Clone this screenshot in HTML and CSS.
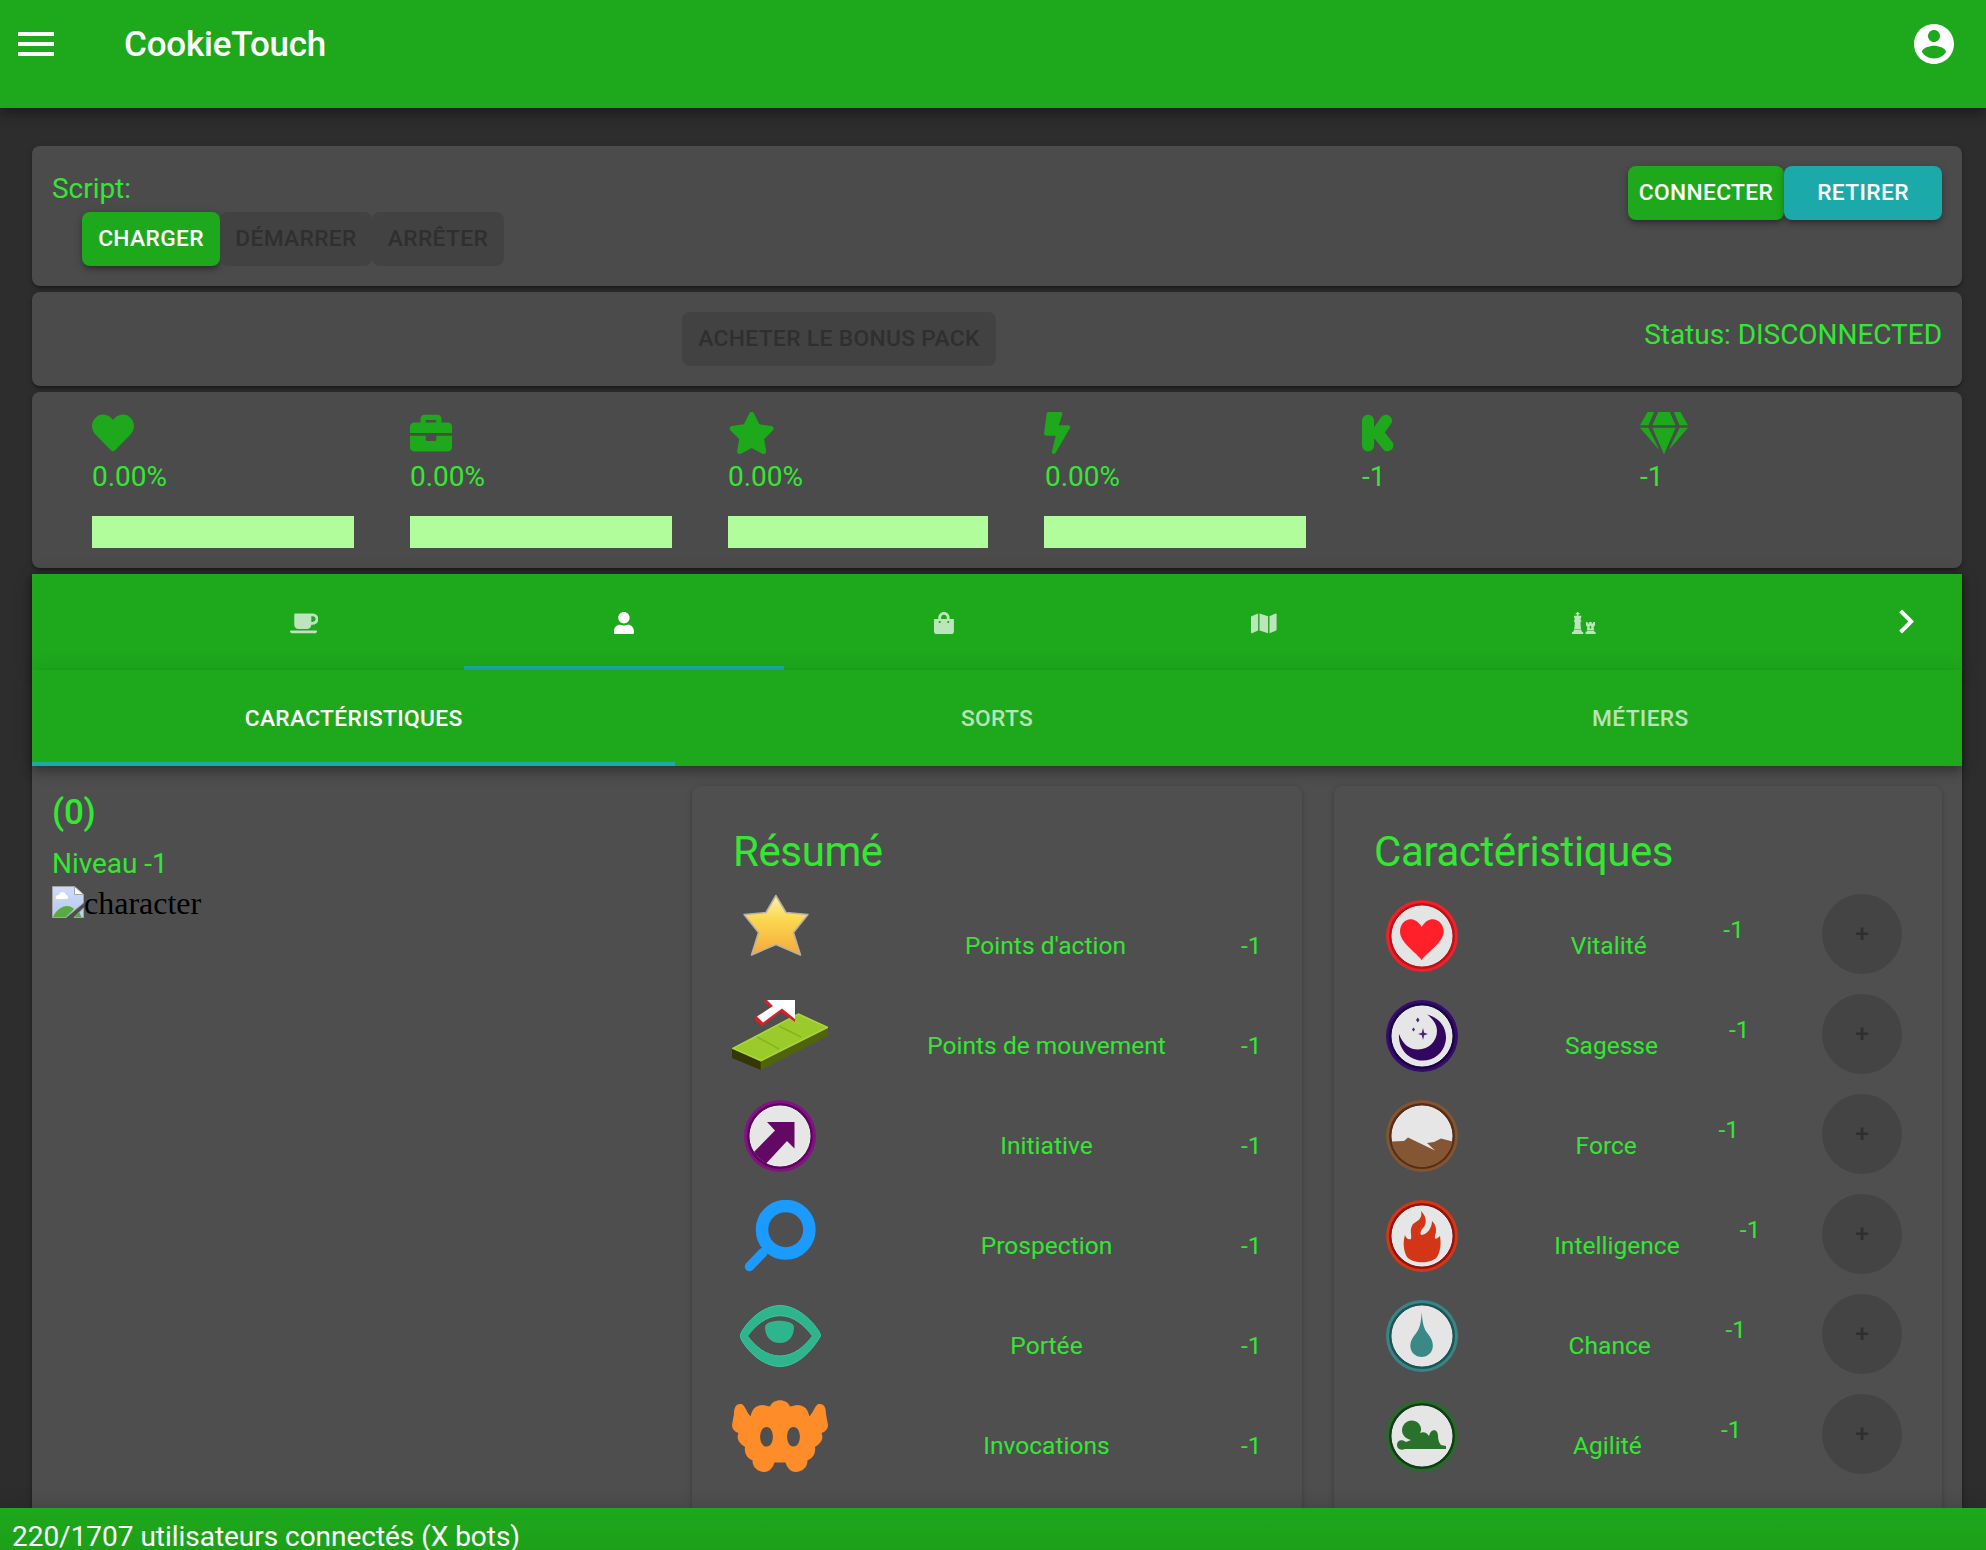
FILE: index.html
```html
<!DOCTYPE html>
<html lang="fr">
<head>
<meta charset="utf-8">
<title>CookieTouch</title>
<link rel="stylesheet" href="styles.css">
</head>
<body>
<div class="app">
  <header class="appbar">
    <svg class="mi" viewBox="0 0 24 24"><path d="M3 18h18v-2H3v2zm0-5h18v-2H3v2zm0-7v2h18V6H3z"/></svg>
    <h1 class="brand">CookieTouch</h1>
    <svg class="mi" viewBox="0 0 24 24"><path d="M12 2C6.48 2 2 6.48 2 12s4.48 10 10 10 10-4.480 10-10S17.520 2 12 2zm0 3c1.660 0 3 1.340 3 3s-1.340 3-3 3-3-1.340-3-3 1.340-3 3-3zm0 14.200c-2.500 0-4.710-1.280-6-3.220.03-1.990 4-3.080 6-3.080 1.990 0 5.970 1.090 6 3.080-1.290 1.940-3.500 3.220-6 3.220z"/></svg>
  </header>

  <main class="content">
    <section class="card script">
      <div>
        <p class="text">Script:</p>
        <div class="btns indent">
          <button class="btn primary charger">Charger</button><button class="btn demarrer" disabled>Démarrer</button><button class="btn arreter" disabled>Arrêter</button>
        </div>
      </div>
      <div class="btns">
        <button class="btn primary connecter">Connecter</button><button class="btn secondary">Retirer</button>
      </div>
    </section>

    <section class="card pack">
      <div class="pack-mid"><button class="btn bonus" disabled>Acheter le bonus pack</button></div>
      <p class="text">Status: DISCONNECTED</p>
    </section>

    <section class="card stats">
      <div class="stat"><svg class="fa" viewBox="0 0 512 512"><path d="M462.3 62.6C407.5 15.9 326 24.3 275.7 76.2L256 96.5l-19.7-20.3C186.1 24.3 104.5 15.9 49.7 62.6c-62.8 53.6-66.1 149.8-9.9 207.9l193.500 199.800c12.500 12.900 32.800 12.900 45.300 0l193.500-199.800c56.300-58.100 53-154.300-9.800-207.900z"/></svg><p class="text">0.00%</p><div class="bar"></div></div>
      <div class="stat"><svg class="fa" viewBox="0 0 512 512"><path d="M320 336c0 8.840-7.160 16-16 16h-96c-8.840 0-16-7.160-16-16v-48H0v144c0 25.600 22.400 48 48 48h416c25.600 0 48-22.400 48-48V288H320v48zm144-208h-80V80c0-25.600-22.400-48-48-48H176c-25.600 0-48 22.400-48 48v48H48c-25.600 0-48 22.400-48 48v80h512v-80c0-25.600-22.400-48-48-48zm-144 0H192V96h128v32z"/></svg><p class="text">0.00%</p><div class="bar"></div></div>
      <div class="stat"><svg class="fa" viewBox="0 0 576 512"><path d="M259.3 17.8L194 150.2 47.9 171.5c-26.200 3.800-36.700 36.100-17.700 54.600l105.700 103-25 145.500c-4.500 26.300 23.200 46 46.400 33.700L288 439.6l130.700 68.700c23.200 12.200 50.900-7.400 46.400-33.700l-25-145.500 105.700-103c19-18.500 8.500-50.800-17.700-54.600L382 150.2 316.7 17.8c-11.700-23.600-45.600-23.900-57.400 0z"/></svg><p class="text">0.00%</p><div class="bar narrow"></div></div>
      <div class="stat"><svg class="fa" viewBox="0 0 320 512"><path d="M296 160H180.6l42.600-129.800C227.2 15 215.7 0 200 0H56C44 0 33.8 8.9 32.2 20.8l-32 240C-1.7 275.2 9.5 288 24 288h118.700L96.6 482.5c-3.600 15.200 8 29.500 23.300 29.500 8.400 0 16.400-4.400 20.800-12l176-304c9.300-15.900-2.200-36-20.700-36z"/></svg><p class="text inset">0.00%</p><div class="bar"></div></div>
      <div class="stat inset"><svg class="fa" viewBox="0 0 384 512"><path d="M147.3 114.4c0-56.200-32.500-82.400-73.400-82.400C26.2 32 0 68.2 0 113.4v283c0 47.300 25.300 83.400 74.900 83.400 39.800 0 72.400-25.600 72.400-83.400v-76.500l112.100 138.300c22.700 27.200 72.100 30.700 103.200 0 27-27.600 27.300-67.400 7.400-92.200l-90.800-114.800 74.900-107.400c17.400-24.700 17.500-63.100-10.400-89.800-30.300-29-82.400-31.600-113.600 12.800L147.3 185v-70.600z"/></svg><p class="text">-1</p></div>
      <div class="stat"><svg class="fa gem" viewBox="0 0 576 512" preserveAspectRatio="none"><path d="M485.5 0L576 160H474.9L405.7 0h79.800zm-128 0l69.200 160H149.3L218.5 0h139zm-267 0h79.800l-69.200 160H0L90.5 0zM0 192h100.700l123 251.700c1.500 3.100-2.700 5.900-5 3.300L0 192zm148.200 0h279.600l-137 318.200c-1 2.400-4.500 2.400-5.500 0L148.2 192zm204.100 251.700l123-251.700H576L357.3 446.9c-2.300 2.700-6.500-.1-5-3.200z"/></svg><p class="text">-1</p></div>
    </section>

    <div class="panel">
      <nav class="tabs main-tabs">
        <a class="tab"><svg viewBox="0 0 640 512"><path d="M192 384h192c53 0 96-43 96-96h32c70.600 0 128-57.400 128-128S582.6 32 512 32H120c-13.300 0-24 10.700-24 24v232c0 53 43 96 96 96zM512 96c35.300 0 64 28.700 64 64s-28.700 64-64 64h-32V96h32zm47.700 384H48.300c-47.600 0-61-64-36-64h583.300c25 0 11.800 64-35.900 64z"/></svg></a>
        <a class="tab active"><svg viewBox="0 0 448 512"><path d="M224 256c70.700 0 128-57.300 128-128S294.7 0 224 0 96 57.3 96 128s57.300 128 128 128zm89.600 32h-16.700c-22.200 10.200-46.900 16-72.900 16s-50.600-5.800-72.900-16h-16.700C60.2 288 0 348.2 0 422.4V464c0 26.500 21.500 48 48 48h352c26.500 0 48-21.500 48-48v-41.600c0-74.200-60.200-134.400-134.400-134.400z"/></svg></a>
        <a class="tab"><svg viewBox="0 0 448 512"><path d="M352 160v-32C352 57.42 294.579 0 224 0 153.42 0 96 57.42 96 128v32H0v272c0 44.183 35.817 80 80 80h288c44.183 0 80-35.817 80-80V160h-96zm-192-32c0-35.290 28.710-64 64-64s64 28.710 64 64v32H160v-32zm160 120c-13.255 0-24-10.745-24-24s10.745-24 24-24 24 10.745 24 24-10.745 24-24 24zm-192 0c-13.255 0-24-10.745-24-24s10.745-24 24-24 24 10.745 24 24-10.745 24-24 24z"/></svg></a>
        <a class="tab"><svg viewBox="0 0 576 512"><path d="M0 117.66v346.320c0 11.320 11.430 19.060 21.940 14.860L160 416V32L20.12 87.95A32.006 32.006 0 0 0 0 117.66zM192 416l192 64V96L192 32v384zM554.06 33.16L416 96v384l139.880-55.950A31.996 31.996 0 0 0 576 394.34V48.02c0-11.320-11.430-19.060-21.940-14.860z"/></svg></a>
        <a class="tab"><svg class="chess" viewBox="0 0 24 22"><path d="M4.900 0h1.500v1h1.200v1.300H6.400V3.700h3.100L8.400 8h.9v1.800h-.8c0 3 .2 5.500.8 7.600H2c.6-2.100.8-4.600.8-7.600H2V8h.9L1.800 3.700h3.100V2.300H3.700V1h1.200zM1.800 18.100h7.700v1.200l1.700 1V22H0v-1.700l1.800-1z"/><path fill-rule="evenodd" d="M14 10h1.700v1.500h1.400V10h2.600v1.500h1.400V10H23v3.600l-1.300 1.200.3 3.200h-7l.3-3.200-1.300-1.200zM17.700 14.600V16.400h1.500V14.600c0-1-1.500-1-1.500 0zM14.800 18.600h7.400v1l1.500.8V22H13.500v-1.600l1.300-.8z"/></svg></a>
        <a class="scroll"><svg class="mi" viewBox="0 0 24 24"><path d="M8.59 16.34l4.580-4.590-4.580-4.590L10 5.75l6 6-6 6z"/></svg></a>
      </nav>
      <nav class="tabs sub-tabs">
        <a class="tab active">Caractéristiques</a><a class="tab">Sorts</a><a class="tab">Métiers</a>
      </nav>

      <div class="body">
        <section class="who">
          <h2 class="name">(0)</h2>
          <p class="text level">Niveau -1</p>
          <div class="broken">
            <svg viewBox="0 0 32 32"><defs><linearGradient id="sky" x2="0" y2="1"><stop stop-color="#cfdcf8"/><stop offset="1" stop-color="#b4c9f0"/></linearGradient></defs>
              <path d="M.5 .5H22.500L31.500 8.500V17L14 31.500H.5z" fill="url(#sky)" stroke="#a5a5a5"/>
              <path d="M22.500 .5V8.500H31.500z" fill="#fff" stroke="#a5a5a5"/>
              <path d="M4 13c-1-3 1-4 3-4 1-4 6-4 7 0 2 0 3 3 1 4z" fill="#fff"/>
              <path d="M1 31C4 24 10 20 15 20c3 0 5 1 7 3l-8 8z" fill="#5aaa42"/>
              <path d="M22 31.500L31.500 22V31.500z" fill="#bed0f3" stroke="#a5a5a5"/><path d="M22.500 31L27 26l2.500 5z" fill="#5aaa42"/></svg><span>character</span>
          </div>
        </section>

        <section class="sheet">
          <h3 class="heading inset">Résumé</h3>
          <div class="row"><svg class="ic star" viewBox="0 0 96 72"><defs><linearGradient id="gold" x2="0" y2="1"><stop stop-color="#fdf0b0"/><stop offset=".4" stop-color="#fbd850"/><stop offset="1" stop-color="#f5a93c"/></linearGradient></defs><path d="M43.900 1.500L54 18.500 76 20.500 61.500 38.500 68.500 61 44 50.500 19.500 61 26.500 38.500 12 20.500 34 18.500z" fill="url(#gold)" stroke="#b9b2a3" stroke-width="1.500" stroke-linejoin="round"/></svg><span class="label">Points d'action</span><span class="value">-1</span></div>
          <div class="row"><svg class="ic" viewBox="0 0 96 72">
            <path d="M0 49L0 58 28.800 70 28.800 60z" fill="#343806"/><path d="M28.800 60L28.800 70 96 36 96 27z" fill="#4f640c"/>
            <path d="M66.400 14L95.500 27.300 28.800 60.700 1 48.300z" fill="#9aca2b" stroke="#aad93b" stroke-width="1.500"/><path d="M25 37L47 49M47 26L69 37" stroke="#86b421" stroke-width="1.500" fill="none"/>
            <path d="M31 1L37 0 63 6V22L49 12 30 26 23 20 24 16 39 8z" fill="#da1f28"/><path d="M35 0H63V19L50 8.500 31 22.500 25 16.500 41 6z" fill="#fff"/></svg><span class="label">Points de mouvement</span><span class="value">-1</span></div>
          <div class="row"><svg class="ic" viewBox="-12 0 96 72"><clipPath id="disc"><circle cx="36" cy="36" r="30.500"/></clipPath><circle cx="36" cy="36" r="36" fill="#821284"/><circle cx="36" cy="36" r="33" fill="#5c075e"/><circle cx="36" cy="36" r="30" fill="#e6e6e6" stroke="#f4f7f4"/><path d="M23 22H50.500V48.500L43 41 18 68 5 57 31 30.500z" fill="#630865" clip-path="url(#disc)"/></svg><span class="label">Initiative</span><span class="value">-1</span></div>
          <div class="row"><svg class="ic" viewBox="-12 0 96 72" fill="none"><circle cx="41.700" cy="29.700" r="23.700" stroke="#1b9bff" stroke-width="12.500"/><path d="M19 52.500L5.500 66.500" stroke="#1b9bff" stroke-width="9.500" stroke-linecap="round"/></svg><span class="label">Prospection</span><span class="value">-1</span></div>
          <div class="row"><svg class="ic" viewBox="0 0 96 72"><path fill-rule="evenodd" fill="#2fb58d" stroke="#38c79d" stroke-width="1" d="M8.500 36C7 33 25 5.500 48 5.500S90 33 88.500 36 71 66.500 48 66.500 7 39 8.500 36zM15.500 36C23 46 34 56 48 56S73 46 80.500 36C73 26 62 15.700 48 15.700S23 26 15.500 36z"/><path d="M33 27C33 18.500 62 18.500 62 27 62 36 57 43 48 43S33 37 33 27z" fill="#2fb58d"/></svg><span class="label">Portée</span><span class="value">-1</span></div>
          <div class="row"><svg class="ic" viewBox="0 0 96 72"><path fill-rule="evenodd" fill="#fe8c29" d="M8.400 4C12 3 14 11 18.500 16.500 20 10 23 5 31 5L38 6.500C41-2 55-2 58 6.500L65 5C73 5 76 10 77.500 16.500 82 11 84 3 87.600 4 93 4 94 9 94 14L96 25C96 29 93 32 89.500 33 92 38 89 43 85 45.500L83 47C84 54 80 59 75.500 60 76 67 70 72 64 72 58 72 55 67 53.500 62.500H42.500C41 67 38 72 32 72 26 72 20 67 20.500 60 16 59 12 54 13 47L11 45.500C7 43 4 38 6.500 33 3 32 0 29 0 25L2 14C2 9 3 4 8.400 4zM34.500 27C26 27 26 46.500 34.500 46.500S43 27 34.500 27zM61.500 27C53 27 53 46.500 61.500 46.500S70 27 61.500 27z"/></svg><span class="label">Invocations</span><span class="value">-1</span></div>
        </section>

        <section class="sheet points">
          <h3 class="heading">Caractéristiques</h3>
          <div class="row"><svg class="ic" viewBox="-12 0 96 72"><circle cx="36" cy="36" r="36" fill="#ee2229"/><circle cx="36" cy="36" r="33" fill="#c01018"/><circle cx="36" cy="36" r="30" fill="#e3e4e4" stroke="#e2f2f2"/><path d="M35.700 60C30 52 14 43 14 31.500 14 20.500 27 13 35.700 27 44 13 57.600 20.500 57.600 31.500 57.600 43 41 52 35.700 60z" fill="#ff2029"/></svg><span class="label">Vitalité</span><span class="value">-1</span><button class="plus" disabled>+</button></div>
          <div class="row"><svg class="ic" viewBox="-12 0 96 72"><circle cx="36" cy="36" r="36" fill="#36096c"/><circle cx="36" cy="36" r="33" fill="#190642"/><circle cx="36" cy="36" r="30" fill="#e6e6e6" stroke="#f4f4f6"/><path d="M41 14.500C55 18 62 30 59.500 42 57 54 47 61 36 60.500 23 60 12 49 13 34 17 45 24 49.500 32 49.500 43 49.500 51 41 51 31 51 24 46 18 41 14.500z" fill="#310760"/><path d="M37 28L38.200 32.800 42 34 38.200 35.200 37 40 35.800 35.200 32 34 35.800 32.800zM31.800 17.500L33.500 20 31.800 22.500 30 20zM27.500 27.500L29 29.500 27.500 31.500 26 29.500z" fill="#4d2578"/></svg><span class="label">Sagesse</span><span class="value">-1</span><button class="plus" disabled>+</button></div>
          <div class="row"><svg class="ic" viewBox="-12 0 96 72"><circle cx="36" cy="36" r="36" fill="#835432"/><circle cx="36" cy="36" r="33" fill="#552d18"/><circle cx="36" cy="36" r="30" fill="#e6e6e6" stroke="#f1f1f1"/><path d="M5.500 41.500L18 41 22 37.500 49 50.500 41 43 48 42 55 38.500 66.500 41.500A31 31 0 0 1 5.500 41.500z" fill="#855633"/></svg><span class="label">Force</span><span class="value">-1</span><button class="plus" disabled>+</button></div>
          <div class="row"><svg class="ic" viewBox="-12 0 96 72"><circle cx="36" cy="36" r="36" fill="#d23717"/><circle cx="36" cy="36" r="33" fill="#94130d"/><circle cx="36" cy="36" r="30" fill="#e5e6e6" stroke="#eef8f8"/><path d="M35 11C39 15 41 20 39 25 37 29 33 31 35 35 40 35 46 29 46 21 50 25 51 29 49 36 48 40 51 39 54 36 55 43 55 50 51 57 45 64 27 64 21 57 17 50 17 41 19 35 20 38 22 40 25 39 26 34 23 30 27 24 31 21 37 19 35 11z" fill="#d23617"/></svg><span class="label">Intelligence</span><span class="value">-1</span><button class="plus" disabled>+</button></div>
          <div class="row"><svg class="ic" viewBox="-12 0 96 72"><circle cx="36" cy="36" r="36" fill="#398584"/><circle cx="36" cy="36" r="33" fill="#1b5558"/><circle cx="36" cy="36" r="30" fill="#e5e5e5" stroke="#f4eeee"/><path d="M35.700 12C36.500 24 38 29 42 34 52 46 45 57 35.700 57S19 46 29.500 34C33.500 29 35 24 35.700 12z" fill="#3b8987"/></svg><span class="label">Chance</span><span class="value">-1</span><button class="plus" disabled>+</button></div>
          <div class="row"><svg class="ic" viewBox="-12 0 96 72"><circle cx="36" cy="36" r="36" fill="#296a2b"/><circle cx="36" cy="36" r="33" fill="#113d15"/><circle cx="36" cy="36" r="30" fill="#e5e5e5" stroke="#f1edf1"/><path d="M11 45C11 40 16 39 20 42L25 40C12 37 14 21 26 20.500 34 21 37 29 34 33 38 31 41 33 43 36 45 28 52 29 52 36 52 39 53 43 55 45L60 46V49H19C14 51 11 48 11 45z" fill="#2a712c"/></svg><span class="label">Agilité</span><span class="value">-1</span><button class="plus" disabled>+</button></div>
        </section>
      </div>
    </div>
  </main>

  <footer class="footer">220/1707 utilisateurs connectés (X bots)</footer>
</div>
</body>
</html>
```
FILE: styles.css
```css
* { box-sizing: border-box; }
body { margin: 0; background: #2d2d2d; font-family: Roboto, "Liberation Sans", sans-serif; }
h1, h2, h3, p { margin: 0; font-weight: 400; }
svg { display: block; flex: none; }
button { font: inherit; border: 0; padding: 0; margin: 0; }

.app { height: 1550px; display: flex; flex-direction: column; overflow: hidden; }
.mi { width: 48px; height: 48px; fill: #fff; }
.inset { padding-left: 1px; }

.appbar {
  flex: none; height: 108px; padding: 20px 28px 0 12px;
  display: flex; align-items: flex-start;
  background: #1ea81c; color: #fff; z-index: 2;
  box-shadow: 0 4px 8px -2px rgba(0,0,0,.2), 0 8px 10px rgba(0,0,0,.14), 0 2px 20px rgba(0,0,0,.12);
}
.brand { flex: 1; margin-left: 64px; font-size: 35px; line-height: 50px; font-weight: 500; letter-spacing: -.22px; }

.content { flex: 1; min-height: 0; padding: 38px 24px 0 32px; display: flex; flex-direction: column; gap: 6px; }
.card {
  flex: none; padding: 20px; border-radius: 8px; background: #4b4b4b;
  box-shadow: 0 2px 6px rgba(0,0,0,.2), 0 2px 2px rgba(0,0,0,.14), 0 4px 2px -2px rgba(0,0,0,.12);
}
.text { font-size: 28px; line-height: 46px; letter-spacing: -.04px; color: #33e733; }

.script { height: 140px; display: flex; justify-content: space-between; }
.btns { display: flex; height: 54px; }
.indent { margin-left: 30px; }
.btn {
  height: 54px; border-radius: 8px; line-height: 54px;
  font-size: 22.75px; font-weight: 500; letter-spacing: .35px; text-transform: uppercase; text-align: center;
  white-space: nowrap; color: #fff;
}
.btn:disabled { background: #424242; color: #2f2f2f; }
.primary, .secondary { box-shadow: 0 2px 10px rgba(0,0,0,.2), 0 4px 4px rgba(0,0,0,.14), 0 6px 2px -4px rgba(0,0,0,.12); }
.primary { background: #1ea81c; }
.secondary { width: 158px; background: #1ba9aa; }
.charger { width: 138px; }
.demarrer { width: 152px; }
.arreter { width: 132px; }
.connecter { width: 156px; }
.bonus { width: 314px; }

.pack { height: 94px; display: flex; justify-content: space-between; }
.pack-mid { padding-left: 630px; }

.stats { height: 176px; padding-left: 60px; display: grid; grid-template-columns: 318px 318px 316px 317px 279px 1fr; }
.fa { height: 42px; fill: #1ea81c; }
.gem { width: 48px; }
.bar { width: 262px; height: 32px; margin-top: 16px; background: #b1fd9b; }
.bar.narrow { width: 260px; }

.panel { flex: 1; min-height: 0; display: flex; flex-direction: column; background: #4e4e4e; box-shadow: 0 2px 6px rgba(0,0,0,.3), 0 2px 2px rgba(0,0,0,.14); }
.tabs {
  flex: none; height: 96px; display: flex; background: #1ea81c;
  box-shadow: 0 4px 8px -2px rgba(0,0,0,.2), 0 8px 10px rgba(0,0,0,.14), 0 2px 20px rgba(0,0,0,.12);
}
.tab {
  display: flex; align-items: center; justify-content: center; border-bottom: 4px solid transparent; padding-top: 4px;
  color: #fff; fill: #fff;
  font-size: 22.75px; font-weight: 500; letter-spacing: .34px; text-transform: uppercase;
}
.tab:not(.active) { color: rgba(255,255,255,.7); fill: rgba(255,255,255,.7); }
.tab.active { border-color: #1ba9aa; }
.tab svg { height: 22.75px; margin-top: 2px; }
.tab .chess { width: 24px; height: 22px; }
.main-tabs { padding-left: 112px; }
.main-tabs .tab { width: 320px; }
.scroll { width: 112px; margin-left: auto; display: flex; align-items: center; justify-content: center; }
.sub-tabs .tab { flex: 1; }

.body { flex: 1; min-height: 0; display: flex; padding: 20px 20px 0; }
.who { width: 640px; }
.name { font-size: 35px; line-height: 53px; font-weight: 500; letter-spacing: -.2px; color: #33e733; }
.level { line-height: 47px; padding-top: 1px; }
.broken { display: flex; margin-top: -1px; font: 32px/35px "Liberation Serif", serif; color: #000; }
.broken svg { width: 32px; height: 32px; }

.sheet {
  width: 610px; height: 800px; padding: 40px 40px 0; border-radius: 8px; background: #4f4f4f;
  box-shadow: 0 2px 6px rgba(0,0,0,.15), 0 1px 3px rgba(0,0,0,.12);
}
.points { width: 608px; margin-left: 32px; }
.heading { margin-bottom: 17px; font-size: 42px; line-height: 51px; letter-spacing: -.4px; color: #33e733; }
.row { height: 100px; display: flex; align-items: flex-start; font-size: 24.5px; line-height: 30px; letter-spacing: .03px; color: #33e733; }
.ic { width: 96px; height: 72px; margin: 6px 24px 0 0; }
.star { margin: 0 22px 0 0; }
.label { padding-top: 37px; text-align: center; }
.sheet:not(.points) .label { flex: 1; }
.value { width: 22px; padding-top: 37px; }
.sheet:not(.points) .value { width: 21px; }
.points .row { justify-content: space-between; }
.points .value { padding-top: 21px; }
.plus { width: 80px; height: 80px; border-radius: 50%; background: #444; color: #2f2f2f; font-size: 24.5px; font-weight: 500; line-height: 80px; }

.footer {
  flex: none; height: 42px; padding-left: 12px; z-index: 2;
  font-size: 28px; line-height: 57px; letter-spacing: -.03px; color: #fff;
  background: linear-gradient(#1ea81c, #1ca019);
  box-shadow: 0 -2px 20px rgba(0,0,0,.14);
}
```
